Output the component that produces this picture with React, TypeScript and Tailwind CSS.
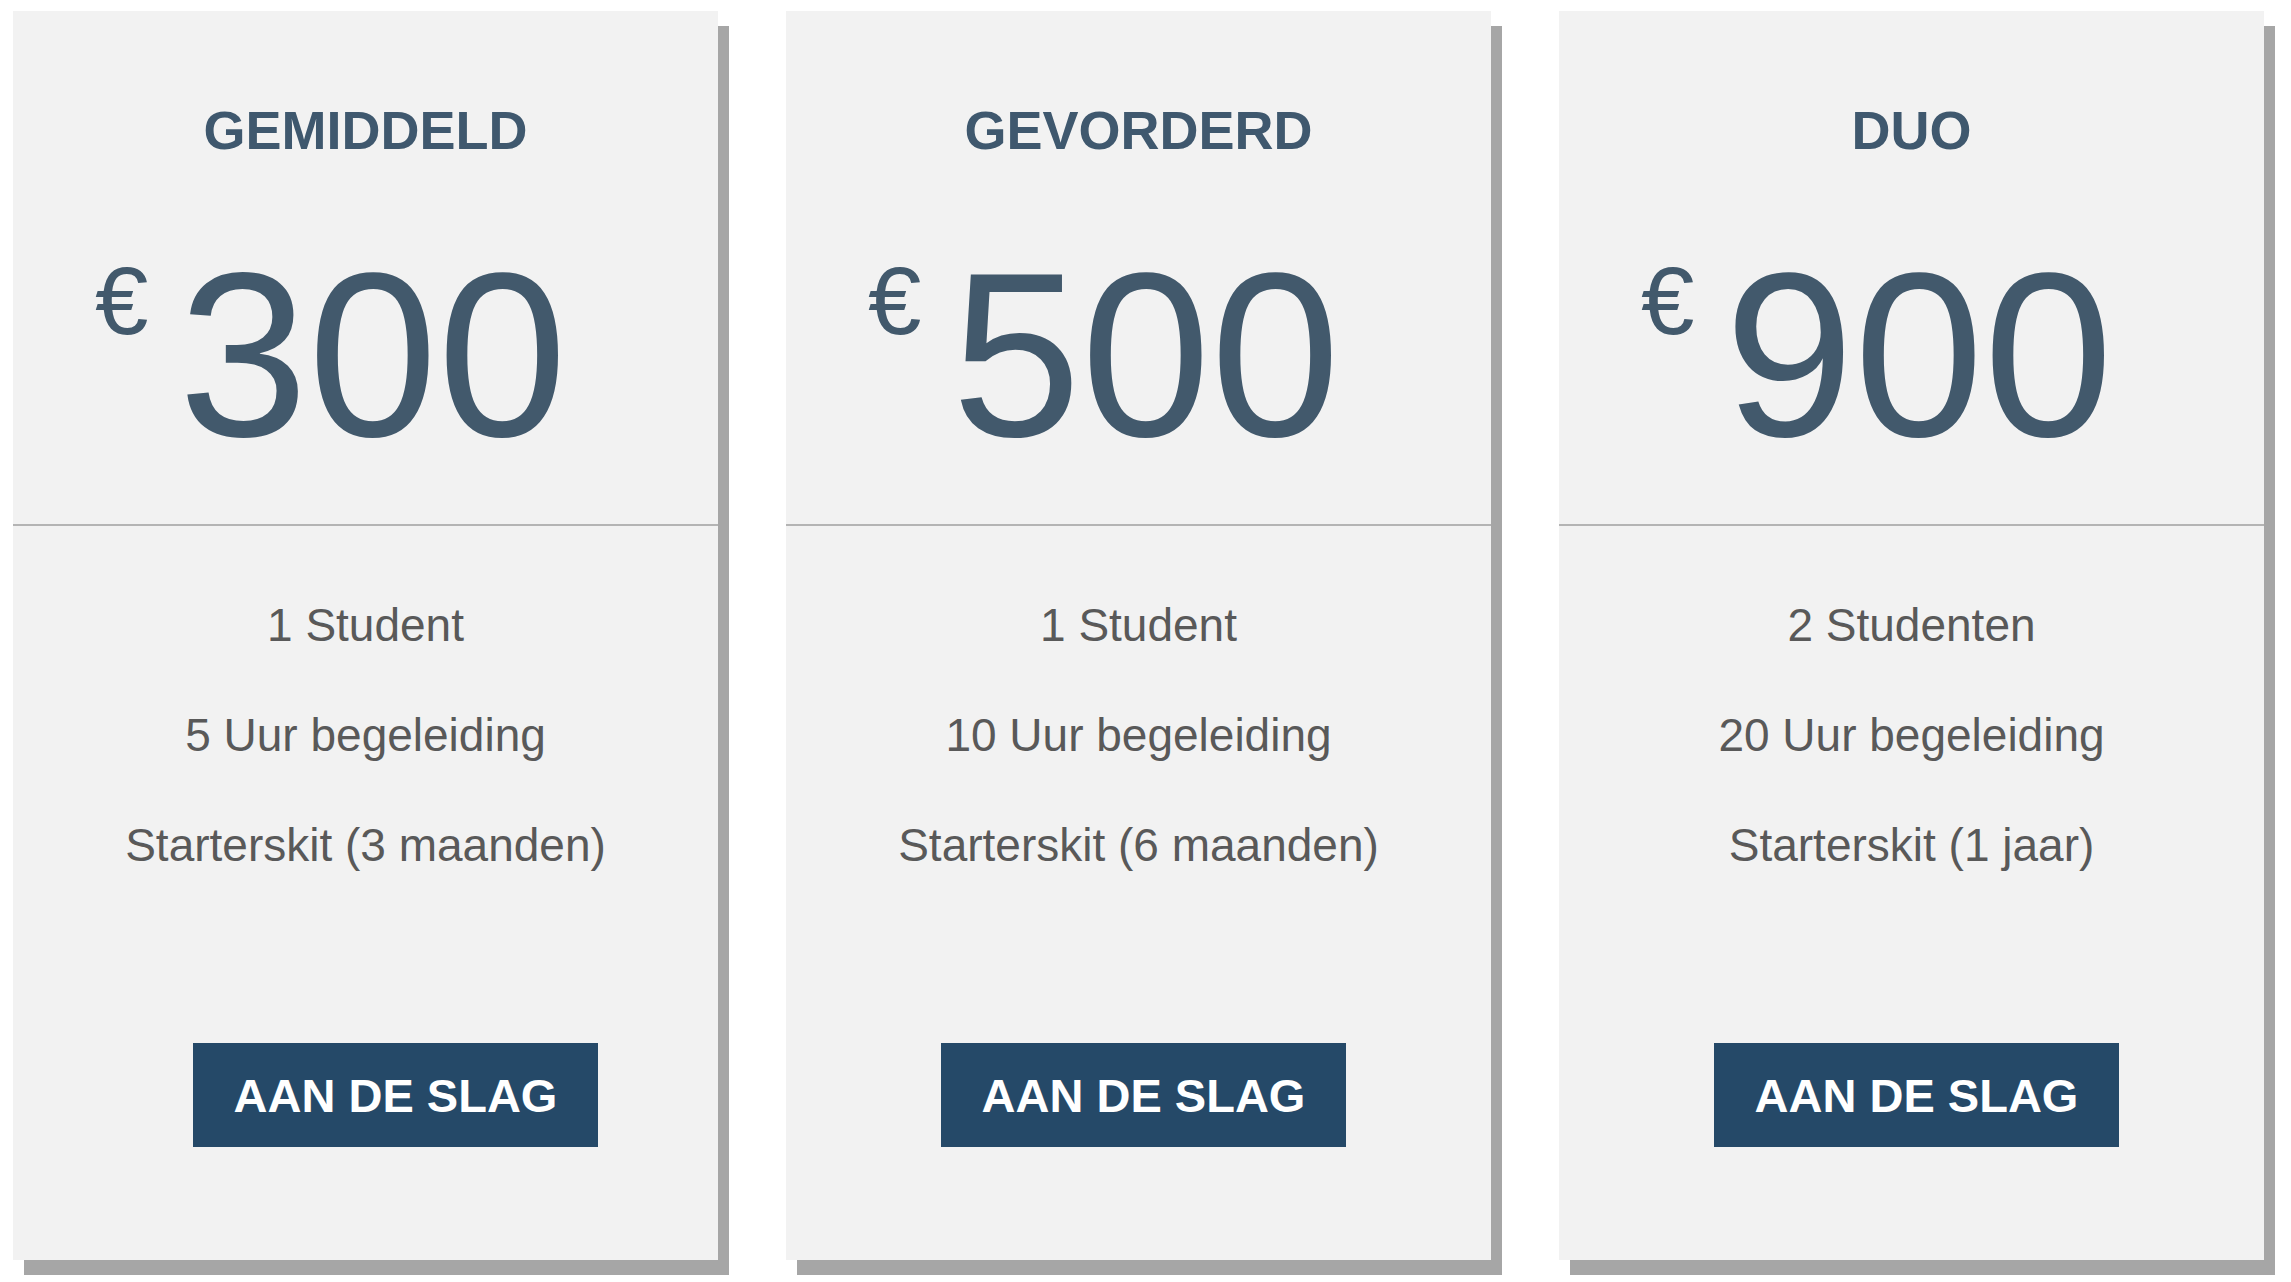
const plans = [
  {
    name: "GEMIDDELD",
    price: "300",
    features: ["1 Student", "5 Uur begeleiding", "Starterskit (3 maanden)"],
    buttonPad: "pl-[180px]",
  },
  {
    name: "GEVORDERD",
    price: "500",
    features: ["1 Student", "10 Uur begeleiding", "Starterskit (6 maanden)"],
    buttonPad: "pl-[155px]",
  },
  {
    name: "DUO",
    price: "900",
    features: ["2 Studenten", "20 Uur begeleiding", "Starterskit (1 jaar)"],
    buttonPad: "pl-[155px]",
  },
];

type Plan = (typeof plans)[number];

function PriceCard({ plan }: { plan: Plan }) {
  return (
    <div className="flex h-[1249px] w-[705px] shrink-0 flex-col bg-[#f2f2f2] shadow-[11px_15px_0_0_#a6a6a6]">
      <div className="flex h-[515px] flex-col border-b-2 border-[#b4b4b4]">
        <h2 className="pt-[92px] text-center text-[54px] font-bold leading-none text-[#3f586e]">
          {plan.name}
        </h2>
        <div className="flex items-start pl-[82px] pt-[82px] text-[#42596c]">
          <span className="mr-[30px] mt-[14px] text-[96px] leading-none">€</span>
          <span className="text-[233px] leading-none">{plan.price}</span>
        </div>
      </div>

      <ul className="flex flex-col pt-[44px] text-center text-[46px] leading-[110px] text-[#595959]">
        {plan.features.map((f) => (
          <li key={f}>{f}</li>
        ))}
      </ul>

      <div className={`flex pt-[143px] ${plan.buttonPad}`}>
        <button className="flex h-[104px] w-[405px] items-center justify-center bg-[#254968] text-[47px] font-bold leading-none text-white">
          AAN DE SLAG
        </button>
      </div>
    </div>
  );
}

export default function App() {
  return (
    <div className="flex h-[1282px] w-full gap-[68px] bg-white pl-[13px] pt-[11px] font-['Liberation_Sans',Arial,sans-serif]">
      {plans.map((p) => (
        <PriceCard key={p.name} plan={p} />
      ))}
    </div>
  );
}
